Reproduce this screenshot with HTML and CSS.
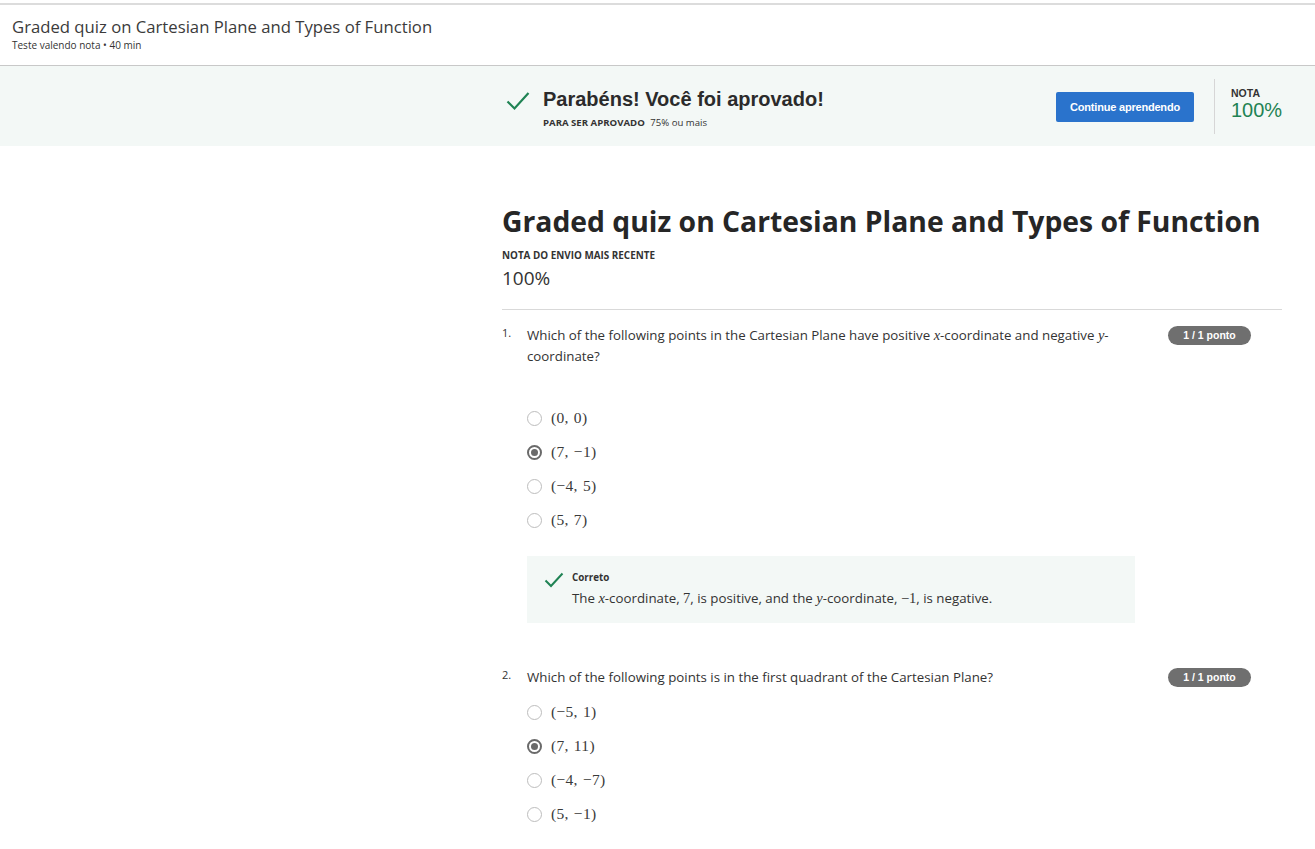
FILE: index.html
```html
<!DOCTYPE html>
<html lang="pt">
<head>
<meta charset="utf-8">
<title>Graded quiz</title>
<link rel="stylesheet" href="styles.css">
</head>
<body>
<div class="topline"></div>
<header class="header">
  <div class="header-title">Graded quiz on Cartesian Plane and Types of Function</div>
  <div class="header-sub">Teste valendo nota • 40 min</div>
</header>
<section class="banner">
  <div class="spacer"></div>
  <div class="banner-inner">
    <div class="banner-left">
      <svg class="check-big" width="24" height="20" viewBox="0 0 24 20"><path d="M1.5 10.5 L8.5 17.5 L22.5 2" fill="none" stroke="#1f8354" stroke-width="2.2"/></svg>
      <div class="banner-text">
        <div class="banner-head">Parabéns! Você foi aprovado!</div>
        <div class="banner-sub"><b>PARA SER APROVADO</b> <span>75% ou mais</span></div>
      </div>
    </div>
    <button class="btn">Continue aprendendo</button>
    <div class="divider"></div>
    <div class="grade">
      <div class="grade-label">NOTA</div>
      <div class="grade-value">100%</div>
    </div>
  </div>
</section>
<main class="layout">
  <div class="spacer"></div>
  <div class="content">
    <h1 class="title">Graded quiz on Cartesian Plane and Types of Function</h1>
    <div class="recent-label">NOTA DO ENVIO MAIS RECENTE</div>
    <div class="recent-value">100%</div>
    <hr class="rule">

    <div class="question q1">
      <div class="q-head">
        <div class="q-num">1.</div>
        <div class="q-text">Which of the following points in the Cartesian Plane have positive <i class="m">x</i>-coordinate and negative <i class="m">y</i>-coordinate?</div>
        <div class="badge">1 / 1 ponto</div>
      </div>
      <div class="options first">
        <div class="opt"><span class="radio"></span><span class="math">(0, 0)</span></div>
        <div class="opt"><span class="radio on"></span><span class="math">(7, −1)</span></div>
        <div class="opt"><span class="radio"></span><span class="math">(−4, 5)</span></div>
        <div class="opt"><span class="radio"></span><span class="math">(5, 7)</span></div>
      </div>
      <div class="feedback">
        <svg class="check-small" width="20" height="16" viewBox="0 0 20 16"><path d="M1.5 8.5 L7 14 L18.5 1.5" fill="none" stroke="#1f8354" stroke-width="2"/></svg>
        <div class="fb-body">
          <div class="fb-label">Correto</div>
          <div class="fb-text">The <i class="m">x</i>-coordinate, <span class="mn">7</span>, is positive, and the <i class="m">y</i>-coordinate, <span class="mn">−1</span>, is negative.</div>
        </div>
      </div>
    </div>

    <div class="question q2">
      <div class="q-head">
        <div class="q-num">2.</div>
        <div class="q-text">Which of the following points is in the first quadrant of the Cartesian Plane?</div>
        <div class="badge">1 / 1 ponto</div>
      </div>
      <div class="options">
        <div class="opt"><span class="radio"></span><span class="math">(−5, 1)</span></div>
        <div class="opt"><span class="radio on"></span><span class="math">(7, 11)</span></div>
        <div class="opt"><span class="radio"></span><span class="math">(−4, −7)</span></div>
        <div class="opt"><span class="radio"></span><span class="math">(5, −1)</span></div>
      </div>
    </div>
  </div>
</main>
</body>
</html>
```
FILE: styles.css
```css
* { box-sizing: border-box; }
html, body { margin: 0; padding: 0; background: #fff; }
body {
  font-family: "Open Sans", "Liberation Sans", sans-serif;
  color: #1f1f1f;
  overflow: hidden;
}
.topline {
  height: 5px;
  border-bottom: 2px solid #dcdcdc;
}
.header {
  height: 61px;
  padding: 11px 12px 0;
  border-bottom: 1px solid #c8c8c8;
}
.header-title {
  font-size: 16.7px;
  line-height: 22px;
  color: #3b3b3b;
  font-weight: 400;
}
.header-sub {
  font-size: 10px;
  line-height: 14px;
  color: #333;
}
.banner {
  height: 80px;
  background: #f3f8f6;
  display: flex;
}
.spacer { width: 502px; flex: none; }
.banner-inner {
  width: 780px;
  display: flex;
  align-items: center;
  height: 100%;
}
.banner-left {
  display: flex;
  align-items: flex-start;
  flex: 1;
  padding-left: 4px;
  padding-top: 4px;
}
.check-big { margin-top: 4px; flex: none; }
.banner-text { margin-left: 13px; }
.banner-head {
  font-family: "Liberation Sans", Arial, sans-serif;
  font-weight: 700;
  font-size: 20px;
  line-height: 24px;
  color: #2b2b2b;
}
.banner-sub {
  font-size: 9.6px;
  margin-top: 5px;
  color: #333;
}
.banner-sub b { font-weight: 700; margin-right: 3px; }
.btn {
  width: 138px;
  height: 30px;
  background: #2a73cc;
  color: #fff;
  border: none;
  border-radius: 2px;
  font-family: "Liberation Sans", Arial, sans-serif;
  font-weight: 700;
  font-size: 11px;
  letter-spacing: -0.2px;
  margin-right: 20px;
  margin-top: 1px;
}
.divider {
  width: 1px;
  height: 55px;
  background: #d6d6d6;
  margin-right: 16px;
}
.grade { width: 51px; padding-bottom: 5px; }
.grade-label {
  font-family: "Liberation Sans", Arial, sans-serif;
  font-weight: 700;
  font-size: 10.5px;
  color: #333;
  line-height: 12px;
}
.grade-value {
  font-family: "Liberation Sans", Arial, sans-serif;
  font-size: 20px;
  line-height: 22px;
  color: #1f8354;
}
.layout { display: flex; }
.content { width: 780px; padding-top: 57px; }
.title {
  font-family: "Open Sans", sans-serif;
  font-weight: 700;
  font-size: 28.3px;
  line-height: 36px;
  color: #262626;
  margin: 0;
}
.recent-label {
  font-size: 9.9px;
  font-weight: 700;
  color: #333;
  margin-top: 10px;
  line-height: 13px;
}
.recent-value {
  font-size: 19px;
  line-height: 26px;
  color: #333;
  margin-top: 3px;
}
.rule {
  border: none;
  border-top: 1px solid #d9d9d9;
  margin: 18px 0 0;
}
.q1 { padding-top: 15px; }
.q2 { padding-top: 44px; }
.q-head {
  display: flex;
  align-items: flex-start;
}
.q-num {
  width: 25px;
  font-size: 11px;
  line-height: 21px;
  color: #333;
  margin-top: -3px;
}
.q-text {
  width: 600px;
  font-size: 13.3px;
  line-height: 21px;
  color: #333;
}
.m {
  font-family: "Liberation Serif", "DejaVu Serif", serif;
  font-style: italic;
  font-size: 14.5px;
  line-height: 1;
}
.mn {
  font-family: "Liberation Serif", "DejaVu Serif", serif;
  font-size: 14.5px;
  line-height: 1;
}
.badge {
  margin-left: auto;
  margin-right: 31px;
  margin-top: 1px;
  width: 83px;
  height: 19px;
  border-radius: 10px;
  background: #6f6f6f;
  color: #fff;
  font-family: "Liberation Sans", Arial, sans-serif;
  font-weight: 700;
  font-size: 10.5px;
  line-height: 19px;
  text-align: center;
}
.options { padding-left: 25px; padding-top: 7px; }
.options.first { padding-top: 34px; }
.opt {
  display: flex;
  align-items: center;
  height: 34px;
}
.radio {
  width: 15px;
  height: 15px;
  border-radius: 50%;
  border: 1.5px solid #bdbdbd;
  margin-right: 9px;
  flex: none;
  position: relative;
}
.radio.on { border: 2px solid #6a6a6a; }
.radio.on::after {
  content: "";
  position: absolute;
  left: 2px; top: 2px;
  width: 7px; height: 7px;
  border-radius: 50%;
  background: #6a6a6a;
}
.math {
  font-family: "Liberation Serif", "DejaVu Serif", serif;
  font-size: 15.5px;
  color: #3a3a3a;
  word-spacing: 1px;
  letter-spacing: 0.3px;
}
.feedback {
  margin: 19px 0 0 25px;
  width: 608px;
  height: 67px;
  background: #f3f8f6;
  display: flex;
  padding: 15px 0 0 17px;
}
.check-small { flex: none; margin-top: 1px; }
.fb-body { margin-left: 8px; }
.fb-label {
  font-size: 9.8px;
  font-weight: 700;
  color: #333;
  line-height: 13px;
}
.fb-text {
  font-size: 13.3px;
  color: #333;
  line-height: 20px;
  margin-top: 4px;
}
```
